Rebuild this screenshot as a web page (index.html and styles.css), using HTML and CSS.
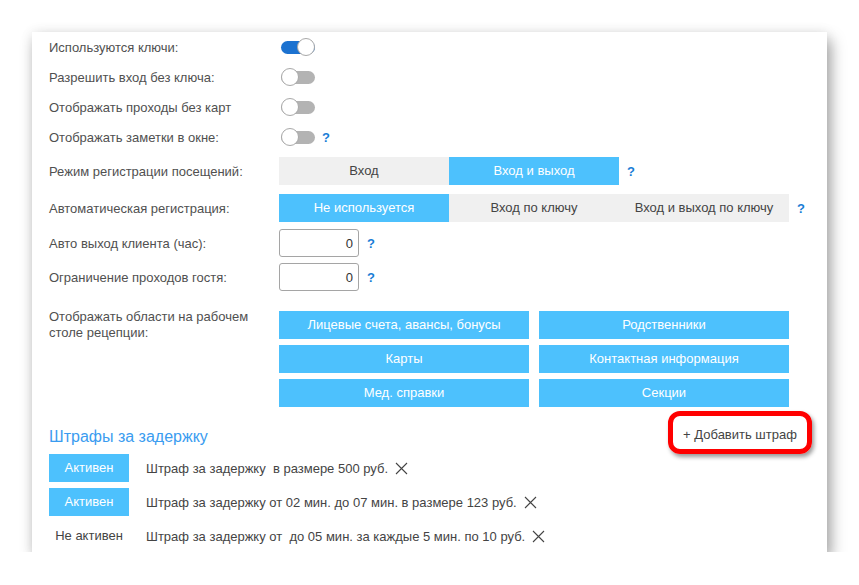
FILE: index.html
```html
<!doctype html>
<html lang="ru">
<head>
    <title>Настройки клуба</title>
    <meta charset="utf-8" />
    <link rel="stylesheet" href="styles.css">
</head>
<body>
    <!-- Settings card -->
    <div class="card">
        <!-- Toggles -->
        <div class="row toggle-row">
            <div class="label">Используются ключи:</div>
            <div class="switch on"><span class="knob"></span></div>
        </div>
        <div class="row toggle-row">
            <div class="label">Разрешить вход без ключа:</div>
            <div class="switch"><span class="knob"></span></div>
        </div>
        <div class="row toggle-row">
            <div class="label">Отображать проходы без карт</div>
            <div class="switch"><span class="knob"></span></div>
        </div>
        <div class="row toggle-row">
            <div class="label">Отображать заметки в окне:</div>
            <div class="switch"><span class="knob"></span></div>
            <span class="help help-toggle">?</span>
        </div>

        <!-- Segmented choices -->
        <div class="row seg-row first">
            <div class="label">Режим регистрации посещений:</div>
            <div class="seg">
                <div class="seg-item">Вход</div>
                <div class="seg-item active">Вход и выход</div>
            </div>
            <span class="help">?</span>
        </div>
        <div class="row seg-row second">
            <div class="label">Автоматическая регистрация:</div>
            <div class="seg">
                <div class="seg-item active">Не используется</div>
                <div class="seg-item">Вход по ключу</div>
                <div class="seg-item">Вход и выход по ключу</div>
            </div>
            <span class="help">?</span>
        </div>

        <!-- Number inputs -->
        <div class="row input-row first">
            <div class="label">Авто выход клиента (час):</div>
            <input class="num" type="text" value="0" />
            <span class="help">?</span>
        </div>
        <div class="row input-row second">
            <div class="label">Ограничение проходов гостя:</div>
            <input class="num" type="text" value="0" />
            <span class="help">?</span>
        </div>

        <!-- Reception desk areas -->
        <div class="row area-row">
            <div class="label area-label">Отображать области на рабочем<br>столе рецепции:</div>
            <div class="area-grid">
                <div class="area-btn">Лицевые счета, авансы, бонусы</div>
                <div class="area-btn">Родственники</div>
                <div class="area-btn">Карты</div>
                <div class="area-btn">Контактная информация</div>
                <div class="area-btn">Мед. справки</div>
                <div class="area-btn">Секции</div>
            </div>
        </div>

        <!-- Penalties -->
        <div class="penalty-head">
            <h2>Штрафы за задержку</h2>
            <div class="add-mark"><span class="add-link">+ Добавить штраф</span></div>
        </div>

        <div class="pen-row first">
            <div class="status on">Активен</div>
            <span class="pen-text">Штраф за задержку &nbsp;в размере 500 руб.</span>
            <svg class="remove" width="13" height="13" viewBox="0 0 13 13"><path d="M1 1L12 12M12 1L1 12" stroke="#444" stroke-width="1.1" fill="none"/></svg>
        </div>
        <div class="pen-row">
            <div class="status on">Активен</div>
            <span class="pen-text">Штраф за задержку от 02 мин. до 07 мин. в размере 123 руб.</span>
            <svg class="remove" width="13" height="13" viewBox="0 0 13 13"><path d="M1 1L12 12M12 1L1 12" stroke="#444" stroke-width="1.1" fill="none"/></svg>
        </div>
        <div class="pen-row">
            <div class="status">Не активен</div>
            <span class="pen-text">Штраф за задержку от &nbsp;до 05 мин. за каждые 5 мин. по 10 руб.</span>
            <svg class="remove" width="13" height="13" viewBox="0 0 13 13"><path d="M1 1L12 12M12 1L1 12" stroke="#444" stroke-width="1.1" fill="none"/></svg>
        </div>
    </div>
</body>
</html>
```

FILE: styles.css
```css
body {
    margin: 0;
    background-color: #fff;
    font-family: 'Liberation Sans', Arial, sans-serif;
    font-size: 13px;
    color: #505050;
}

/* Card */
.card {
    margin: 32px 0 0 32px;
    width: 795px;
    height: 520px;
    box-sizing: border-box;
    padding: 0 38px 0 17px;
    background-color: #fff;
    box-shadow: 4px 8px 14px rgba(0, 0, 0, 0.35), 0 0 12px rgba(0, 0, 0, 0.08);
}

.row {
    display: flex;
    align-items: center;
}

.label {
    width: 230px;
    flex: none;
}

.help {
    margin-left: 8px;
    color: #1a7dd6;
    font-weight: bold;
}

/* Toggles */
.toggle-row {
    height: 30px;
}

.switch {
    width: 34px;
    height: 13px;
    margin-left: 2px;
    border-radius: 7px;
    background-color: #b3b3b3;
    display: flex;
    align-items: center;
}

.switch.on {
    background-color: #1c72d0;
    justify-content: flex-end;
}

.knob {
    width: 16px;
    height: 16px;
    border: 1px solid #a8a8a8;
    border-radius: 50%;
    background-color: #fff;
    flex: none;
}

.help-toggle {
    margin-left: 7px;
}

/* Segmented control */
.seg-row.first {
    margin-top: 5px;
}

.seg-row.second {
    margin-top: 9px;
}

.seg {
    display: flex;
}

.seg-item {
    width: 170px;
    height: 28px;
    line-height: 28px;
    text-align: center;
    background-color: #f0f0f0;
    color: #444;
}

.seg-item.active {
    background-color: #4dc1fd;
    color: #fff;
}

/* Number inputs */
.input-row.first {
    margin-top: 7px;
}

.input-row.second {
    margin-top: 6px;
}

.num {
    width: 80px;
    height: 28px;
    box-sizing: border-box;
    border: 1px solid #a5a5a5;
    border-radius: 3px;
    padding: 0 5px;
    text-align: right;
    font-family: 'Liberation Sans', Arial, sans-serif;
    font-size: 13px;
    color: #333;
}

/* Areas grid */
.area-row {
    margin-top: 20px;
    align-items: flex-start;
}

.area-label {
    line-height: 16px;
    margin-top: -2px;
}

.area-grid {
    display: grid;
    grid-template-columns: 250px 250px;
    column-gap: 10px;
    row-gap: 6px;
}

.area-btn {
    height: 28px;
    line-height: 28px;
    text-align: center;
    background-color: #4dc1fd;
    color: #fff;
}

/* Penalties */
.penalty-head {
    display: flex;
    justify-content: space-between;
    align-items: center;
    margin-top: 4px;
    margin-right: -23px;
}

.penalty-head h2 {
    margin: 8px 0 0;
    font-size: 16px;
    font-weight: normal;
    color: #3a9cf0;
}

.add-mark {
    width: 144px;
    height: 43px;
    box-sizing: border-box;
    border: 5px solid #ff0000;
    border-radius: 12px;
    box-shadow: 2px 3px 4px rgba(0, 0, 0, 0.4);
    display: flex;
    justify-content: center;
    align-items: center;
    padding-top: 4px;
}

.add-link {
    color: #444;
}

.pen-row {
    display: flex;
    align-items: center;
    height: 28px;
    margin-top: 6px;
}

.pen-row.first {
    margin-top: 0;
}

.status {
    width: 80px;
    height: 28px;
    line-height: 28px;
    text-align: center;
    color: #444;
    flex: none;
}

.status.on {
    background-color: #4dc1fd;
    color: #fff;
}

.pen-text {
    margin-left: 17px;
    color: #444;
}

.remove {
    margin-left: 7px;
}
```
